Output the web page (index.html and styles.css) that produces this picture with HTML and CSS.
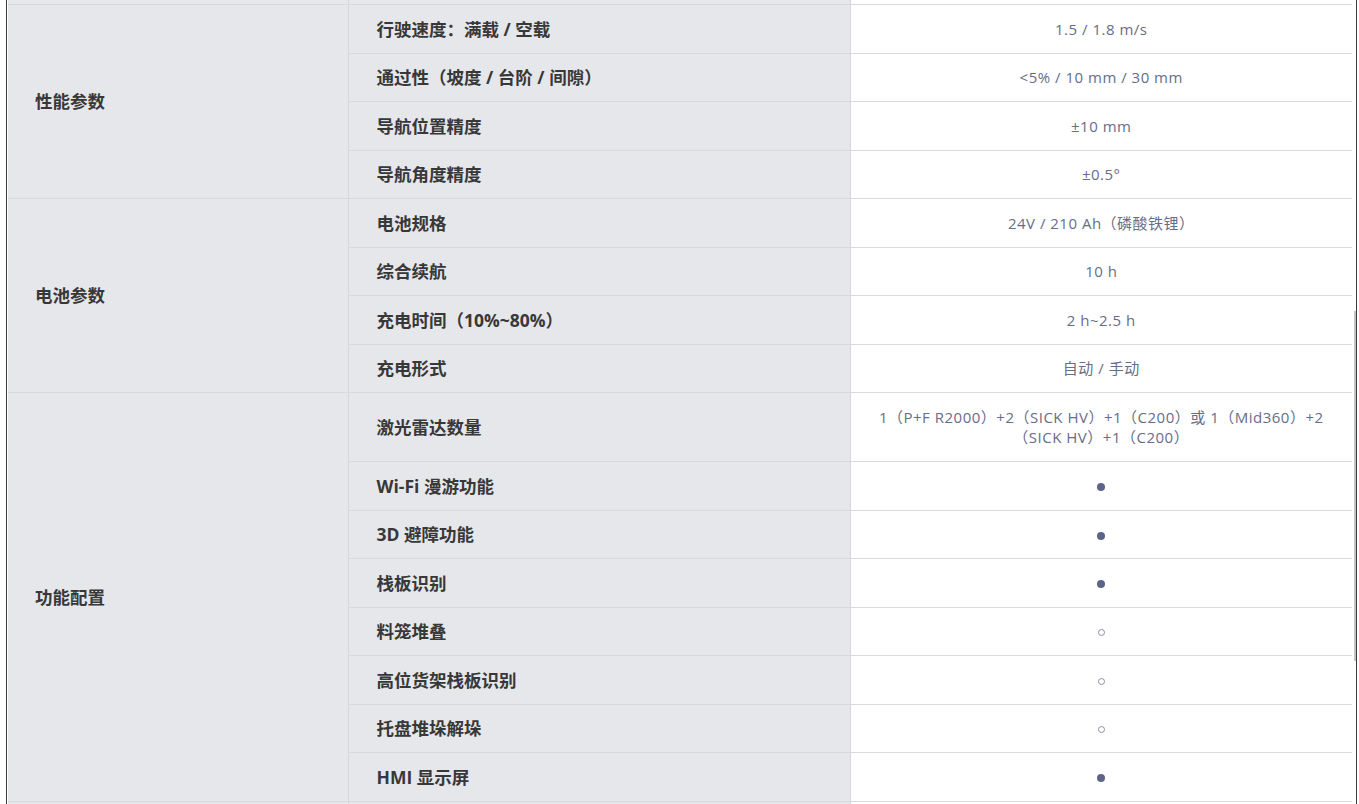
FILE: index.html
```html
<!DOCTYPE html>
<html lang="zh-CN">
<head>
<meta charset="utf-8">
<title>规格参数</title>
<link rel="stylesheet" href="styles.css">
</head>
<body>
<div class="frame">
  <table class="spec">
    <colgroup><col class="c1"><col class="c2"><col class="c3"></colgroup>
    <tr class="cut"><td class="cat"></td><td class="param"></td><td class="val"></td></tr>
    <tr><td class="cat" rowspan="4">性能参数</td><td class="param">行驶速度：满载 / 空载</td><td class="val">1.5 / 1.8 m/s</td></tr>
    <tr><td class="param">通过性（坡度 / 台阶 / 间隙）</td><td class="val">&lt;5% / 10 mm / 30 mm</td></tr>
    <tr><td class="param">导航位置精度</td><td class="val">±10 mm</td></tr>
    <tr><td class="param">导航角度精度</td><td class="val">±0.5°</td></tr>
    <tr><td class="cat" rowspan="4">电池参数</td><td class="param">电池规格</td><td class="val">24V / 210 Ah（磷酸铁锂）</td></tr>
    <tr><td class="param">综合续航</td><td class="val">10 h</td></tr>
    <tr><td class="param">充电时间（10%~80%）</td><td class="val">2 h~2.5 h</td></tr>
    <tr><td class="param">充电形式</td><td class="val">自动 / 手动</td></tr>
    <tr><td class="cat" rowspan="8">功能配置</td><td class="param">激光雷达数量</td><td class="val">1（P+F R2000）+2（SICK HV）+1（C200）或 1（Mid360）+2 （SICK HV）+1（C200）</td></tr>
    <tr><td class="param">Wi-Fi 漫游功能</td><td class="val"><span class="dot"></span></td></tr>
    <tr><td class="param">3D 避障功能</td><td class="val"><span class="dot"></span></td></tr>
    <tr><td class="param">栈板识别</td><td class="val"><span class="dot"></span></td></tr>
    <tr><td class="param">料笼堆叠</td><td class="val"><span class="ring"></span></td></tr>
    <tr><td class="param">高位货架栈板识别</td><td class="val"><span class="ring"></span></td></tr>
    <tr><td class="param">托盘堆垛解垛</td><td class="val"><span class="ring"></span></td></tr>
    <tr><td class="param">HMI 显示屏</td><td class="val"><span class="dot"></span></td></tr>
    <tr class="cut"><td class="cat"></td><td class="param"></td><td class="val"></td></tr>
  </table>
  <div class="thumb"></div>
</div>
</body>
</html>
```

FILE: styles.css
```css
html, body {
  margin: 0;
  padding: 0;
  background: #ffffff;
  overflow: hidden;
}

.frame {
  position: relative;
  margin-left: 6px;
  width: 1348px;
  height: 804px;
  padding-left: 1px;
  border-left: 1px solid #3a3a3a;
  border-right: 1px solid #3a3a3a;
  overflow: hidden;
  box-sizing: content-box;
}

.spec {
  width: 1344px;
  border-collapse: collapse;
  table-layout: fixed;
  font-family: "Open Sans", "Noto Sans CJK SC", sans-serif;
}

.c1 { width: 340px; }
.c2 { width: 502px; }

.spec td {
  border-bottom: 1px solid #d9dadd;
  padding: 13.5px 28px 13.5px 28px;
  line-height: 20.5px;
  vertical-align: middle;
}

.spec td.cat,
.spec td.param {
  background: #e6e7ea;
  color: #383838;
  font-weight: 700;
  font-size: 17.5px;
}

.spec td.cat {
  padding-left: 27px;
  border-right: 1px solid #d6d7da;
}

.spec td.param {
  border-right: 1px solid #d6d7da;
}

.spec td.val {
  background: #ffffff;
  color: #676d88;
  font-size: 15px;
  letter-spacing: 0.5px;
  text-align: center;
  padding-left: 18px;
  padding-right: 18px;
}

.spec tr.cut td {
  height: 4px;
  padding: 0;
  line-height: 0;
}

.dot {
  display: inline-block;
  width: 8px;
  height: 8px;
  border-radius: 50%;
  background: #5d6488;
  vertical-align: middle;
}

.ring {
  display: inline-block;
  width: 5px;
  height: 5px;
  border-radius: 50%;
  border: 1px solid #8a8fa8;
  vertical-align: middle;
}

.thumb {
  position: absolute;
  right: -1px;
  top: 311px;
  width: 3px;
  height: 350px;
  background: #c4c4c4;
}
```
